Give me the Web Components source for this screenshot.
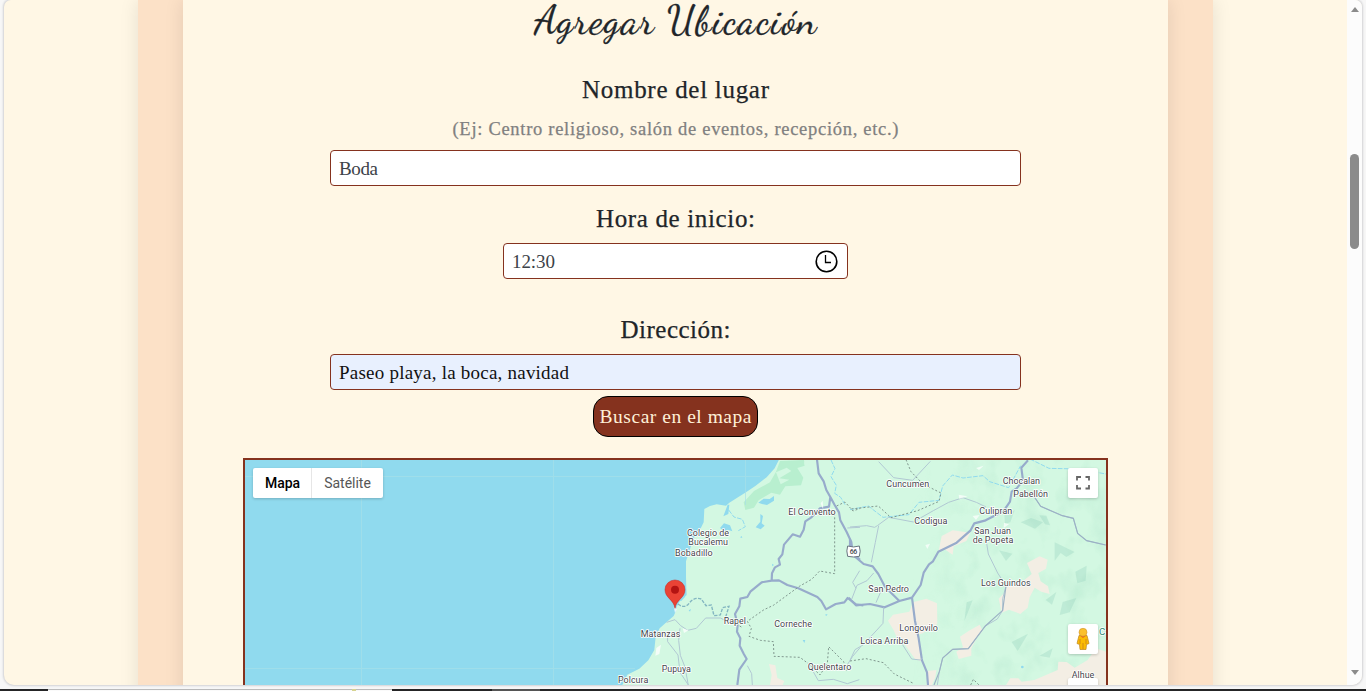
<!DOCTYPE html>
<html lang="es"><head><meta charset="utf-8"><title>Agregar Ubicación</title>
<style>
html,body{margin:0;height:100%;overflow:hidden;background:#f7f7f7}
body{font-family:"Liberation Serif",serif;color:#212529}
</style></head><body>
<app-window>
  <location-card>
    <fit-text class="title" width="282">Agregar Ubicación</fit-text>
    <fit-text class="label first" width="187">Nombre del lugar</fit-text>
    <fit-text class="hint" width="446">(Ej: Centro religioso, salón de eventos, recepción, etc.)</fit-text>
    <form-field style="--w:691px"><fit-text width="39">Boda</fit-text></form-field>
    <fit-text class="label second" width="159">Hora de inicio:</fit-text>
    <form-field style="--w:345px"><fit-text width="43">12:30</fit-text><clock-icon slot="end"></clock-icon></form-field>
    <fit-text class="label third" width="110">Dirección:</fit-text>
    <form-field style="--w:691px;--bg:#e8f0fe;--ink:#111"><fit-text width="230">Paseo playa, la boca, navidad</fit-text></form-field>
    <search-button><fit-text width="152">Buscar en el mapa</fit-text></search-button>
    <map-view></map-view>
  </location-card>
</app-window>
<script>
const define=(name,html,init)=>customElements.define(name,class extends HTMLElement{
  constructor(){super();const t=document.createElement('template');t.innerHTML=html;
    this.attachShadow({mode:'open'}).append(t.content.cloneNode(true));}
  connectedCallback(){if(init)init(this);}
});

define('app-window',`<style>
:host{display:flex;flex-direction:column;height:691px;width:1366px;overflow:hidden}
.frame{margin:0 4px;height:685px;flex:none;display:flex;background:#fff7e5;border-radius:7px 7px 10px 10px;overflow:hidden}
.shell{flex:none;height:689px;overflow:hidden;background:#f7f7f7}
.frame{box-shadow:0 0 2px 1px #d2d2d5}
.page{flex:1;display:flex;justify-content:center;min-width:0;overflow:hidden}
.bar{width:15px;background:#fcfcfc;display:flex;flex-direction:column;align-items:center}
.up,.down{width:0;height:0;border:4.5px solid transparent}
.up{border-top:0;border-bottom:5px solid #8b8b8b;margin-top:7px}
.thumb{width:9px;height:95px;border-radius:5px;background:#8b8b8b;margin-top:142px}
.down{border-bottom:0;border-top:5px solid #8b8b8b;margin-top:421px}
.task{height:2px;display:flex;background:#252526}
.task i{display:block}
</style>
<div class="shell"><div class="frame"><div class="page"><slot></slot></div>
<div class="bar"><div class="up"></div><div class="thumb"></div><div class="down"></div></div></div></div>
<div class="task"><i style="width:48px"></i><i style="width:304px;background:linear-gradient(#bbb 1px,#fafafa 1px)"></i><i style="width:4px;background:#d6d391"></i><i style="width:36px;background:linear-gradient(#bbb 1px,#fafafa 1px)"></i><i style="width:100px"></i><i style="width:48px;background:#555"></i></div>`);

define('location-card',`<style>
:host{display:block;box-sizing:border-box;width:1075px;height:720px;padding:0 45px;background:#fce1c7;box-shadow:0 0 18px rgba(0,0,0,.1)}
.inner{height:100%;background:#fff7e5;box-shadow:0 0 18px rgba(0,0,0,.1);display:flex;flex-direction:column;align-items:center}
::slotted(.title){font:40px/40px "Dancing Script","Liberation Serif",cursive;-webkit-text-stroke:.3px}
::slotted(.label){font-size:25px;line-height:30px;-webkit-text-stroke:.25px}
::slotted(.first){margin-top:35px}
::slotted(.hint){font-size:18.500px;line-height:24px;color:#808080;margin:12px 0 9px;-webkit-text-stroke:.25px}
::slotted(.second){margin:18px 0 9px}
::slotted(.third){margin:36px 0 9px}
</style><div class="inner"><slot></slot></div>`);

/* Spreads its letters so that the line takes the given width. */
define('fit-text',`<style>:host{display:block;flex:none;white-space:pre}span{display:inline-block}</style><span><slot></slot></span>`,el=>{
  const s=el.shadowRoot.querySelector('span');
  const fit=()=>{const n=el.textContent.length,w=s.getBoundingClientRect().width,d=(el.getAttribute('width')-w)/(n-1);
    s.style.letterSpacing=d+'px';s.style.marginRight=-d+'px';};
  document.addEventListener('DOMContentLoaded',fit);
});

define('form-field',`<style>
:host{display:flex;flex:none;box-sizing:border-box;width:var(--w);height:36px;border:1px solid #85321e;border-radius:4px;background:var(--bg,#fff);color:var(--ink,#3c4248);align-items:center;justify-content:space-between;padding:1px 9px 0 8px;font-size:19px;line-height:24px}
</style><slot></slot><slot name="end"></slot>`);

define('clock-icon',`<style>:host{display:block;width:23px;height:23px;margin-top:-1px}svg{display:block}</style>
<svg width="23" height="23" fill="none" stroke="#000"><circle cx="11.5" cy="11.5" r="10.3" stroke-width="1.6"/><path d="M10.5 5v7.500H16" stroke-width="1.300"/></svg>`);

define('search-button',`<style>:host{display:flex;flex:none;box-sizing:border-box;width:165px;height:41px;margin-top:6px;border:1px solid #000;border-radius:15px;background:#85321e;color:#fff0d8;align-items:center;justify-content:center;font-size:19.500px;line-height:24px}</style><slot></slot>`);

define('map-view',`<style>
:host{display:block;flex:none;box-sizing:border-box;position:relative;width:865px;height:300px;margin-top:21px;border:2px solid #85321e;font-family:Roboto,sans-serif;overflow:hidden}
svg{display:block}
.types{position:absolute;left:8px;top:8px;display:flex;height:30px;background:#fff;border-radius:2px;box-shadow:0 1px 3px rgba(0,0,0,.2);font-size:14px;line-height:30px;color:#565656}
.types b{width:58px;padding-left:1px;box-sizing:border-box;width:59px;text-align:center;font-weight:500;color:#000;border-right:1px solid #e6e6e6}
.types span{width:71px;text-align:center}
.ctl{position:absolute;right:8px;width:30px;height:30px;background:#fff;border-radius:2px;box-shadow:0 1px 3px rgba(0,0,0,.2)}
text{font-size:27px;fill:#45464c;stroke:#fff;stroke-width:5px;stroke-linejoin:round;paint-order:stroke}
.w{fill:#90daee}.t{fill:none;stroke:#90daee;stroke-width:4;stroke-dasharray:14 4}
.r{fill:none;stroke:#97abcb;stroke-width:6.500;stroke-linejoin:round}
.s{fill:none;stroke:#b1c8d3;stroke-width:3;stroke-linejoin:round}
.d{fill:none;stroke:#80978e;stroke-width:3;stroke-dasharray:6 6}
.u{fill:#f3eee4}
</style>
<svg width="861" height="225" viewBox="245 460 861 225">
<defs><filter id="relief" x="0" y="0" width="1" height="1" color-interpolation-filters="sRGB"><feTurbulence type="fractalNoise" baseFrequency=".045 .035" numOctaves="3" seed="8"/><feColorMatrix values="0 0 0 0 .47 0 0 0 0 .78 0 0 0 0 .66 1.8 0 0 0 -.84"/></filter>
<linearGradient id="fade"><stop offset="0" stop-color="#000"/><stop offset=".35" stop-color="#fff"/></linearGradient><mask id="m"><rect x="910" y="460" width="200" height="230" fill="url(#fade)"/></mask></defs>
<rect x="245" y="460" width="861" height="225" fill="#d3f8e2"/>
<g mask="url(#m)"><rect x="910" y="460" width="200" height="230" filter="url(#relief)" opacity=".2"/></g>
<g transform="translate(600 455) scale(.33333)">
<path class="w" d="M-1070 10H539L524 40 500 67 467 92 438 112 414 127 388 143 378 152 350 148 330 153 313 162 311 202 300 224 282 248 268 287 258 319 258 365 259 400 260 420 240 438 230 455 228 467 221 483 201 500 179 520 167 545 163 585 145 616 118 641 82 659 67 690H-1070Z"/>
<path d="M540 18 528 50 510 82 462 108 431 142 436 165 462 158 476 136 514 113 540 119 556 94 603 91 610 68 592 39 614 32 612 15Z" fill="#b8efcf"/>
<path d="M528 52l32-14 14 10-36 22 30 4-26 14M612 22l24 8-20 6Z" fill="#d3f8e2"/>
<path class="w" d="M475 143 491 131 509 132 522 123 522 137 501 150 486 147ZM481 177l8 6-4 22 9 7-12 11-15-6 14-17ZM360 219l12-14 18 6 7 18-14-5-7 8ZM383 149h5l-3 28-15 7ZM238 435l10-21 10-3-3 15-12 13ZM420 247l5-4 2 6ZM608 555h8l-3 9ZM266 466l7-4-3 8ZM676 478l7 0-5 6ZM516 326l6 4-5 4Z"/>
<path class="t" style="stroke-width:3" d="M386 165l16 21 25 7 9 22-21 12M693 15l12 26-12 24 16 26-5 24 18 12 13 22"/>
<path d="M234 447q20 16 34-3t36-12l14 20 16-2 8 32 19-2 7-22 19-4-10 32" fill="none" stroke="#83b6c1" stroke-width="4" stroke-dasharray="10 4"/>
<path class="r" d="M651 14 656 55 671 79 679 105 691 126 704 150 717 172 721 196 740 231 754 261 758 293 780 314M691 126 687 155 660 160 633 188 616 199 611 224 600 245 578 238 552 269 547 298 536 312 540 329 525 337 516 355 515 377 485 382 451 410 442 426 421 431 418 454 405 477 413 510 411 530 421 550 419 572 431 596 440 612 418 644 412 690M515 377 537 376 562 390 595 400 652 426 664 438 678 463 707 447 733 442 743 429 768 448 790 451"/>
<path class="s" d="M200 502l25-8 17 18 21 14 26-6 28-31 44 0 29 15M202 530l1 30 31 40 6 52 25 38M240 520l-4 36 5 45 14 35 10 55M442 632l13 24 2 34M768 400l-10-18 21-35M634 640l21 37 45-4 42 13 36-12M735 640l23-36 23-27M742 219l38-2"/>
<path class="d" d="M704 175V356L659 348 635 373 598 394 520 451 492 464 442 499 454 520 447 544 481 556 520 560 522 604 600 607 625 626 660 660 682 626 686 575 731 620 740 650M710 153l25-12 24 27 22-8M424 516l-48-28"/>
<path class="u" d="M507 627l19 4 6 38 21 9-5 12H510l5-30Z"/>
<path fill="#fff" opacity=".75" d="M221 455l10 7-6 12ZM169 579l14-10-5 28-12 5ZM248 520l18 6-14 8ZM662 145l6-8 2 28Z"/>
</g>
<g transform="translate(850 455) scale(.33333)">
<path class="u" d="M275 243l33-17 53 7-12 25-38 16-3 25-22-15-20 3ZM531 324l38-20 24 10-5 27-23 13 7 25 22 15 5 23-25-7-20-12-15 29-6 31-22 19-34-13-22 9-9-42 17-18 10-25 39-4 33-27ZM189 442l40-11 32 14 1 62-44 28-14 4 8 55 1 25-18-7-38-54-17-12-9-20-17-29 15-18 49-9ZM330 545l27-18 32-18 9 19-16 18-18 34 0 22-38 10-7-22 20-13ZM233 648l26-3-3 22-10 23H230ZM468 690l13-20 24 0 10 10 38-5 70-30 2-25 25 1 24 17 39-23 25-35 30 10v100Z"/>
<g fill="#90cdb9" opacity=".3"><path d="M463 180l31-14-13 36-16 4ZM512 202l31-13 36 13-24 19ZM447 286l40 10-19 22ZM568 181l21 1 11 29-15-3ZM614 262l60 29-25 15-17-12-18 23ZM587 435l32-24-13 38ZM638 441l41-12-20 43-30 8ZM676 350l34-18-3 45-25 8ZM485 561l49-25-31 52ZM350 442l18-6-25 63ZM569 602l39-22-9 28Z"/></g>
<path class="t" style="stroke-width:3" d="M0 164l55-11 44 34 78-8 30-37 60-6 11-43 29-33 32 9 60-7 20 18 57 18 36-66M540 12l57 28 88 2 83 15"/>
<path class="r" d="M534 16 514 38 519 77 500 100 485 110 480 140 460 169 407 196 373 205 361 227 320 263 265 290 249 319 237 328 221 353 212 390 186 428 148 438 104 457 60 447 18 451-4 428M0 251 0 292 41 327 68 334 85 357 105 395 148 438M186 428 195 498 206 550 216 616 231 652 234 690"/>
<path class="s" d="M552 124l20 30 65 28 33 8 13 45 27 22 57 13M405 232l10 65 28 57 25 39-10 38 0 35-16 26-36 21-25 33-26 35-47 2-30 26-10 41-6 40-8 20M0 216l50-4 24 5 8-5 34-25 74 14 60-34 46-25 43-14 40 14 29 14M101 457l-2 48-21 23-39 42-24 14-15 32M150 557l35 55 26 3 8-6M86 20l45 48 57 8 53-57M86 212l-10 50-12 60M71 354l-20 23-30 14-16 42M97 399l-19 44"/>
<path d="M552 124l20 30 65 28 33 8 13 45 27 22 57 13M468 393l-10 73-52 47-51 68-47 2-30 26-10 41-16 40" fill="none" stroke="#9bb1c4" stroke-width="3.500"/>
<path class="d" d="M168 14l15 36 36 37 54 27-6 25-64 28-80 21-38-35-82 9M0 618l48-7 52 12 33 34 55 27M362 690l8-17 17 17"/>
<path fill="#fff" opacity=".7" d="M378 39l23-7-14 13ZM326 119l27 5-25 8ZM226 270l14-4-8 16ZM368 183l21-3-11 15ZM462 203l15 5-16 11Z"/>
<circle cx="517" cy="636" r="4" class="w"/>
</g>
<path d="M361.500 460V685M553.500 460V685M745.500 460V505M245 476.500H760M245 668.500H635" stroke="#a8e1e8" opacity=".65"/>
<g transform="translate(600 455) scale(.33333)">
<text x="565" y="179" textLength="142">El Convento</text><text x="261" y="243" textLength="126">Colegio de</text><text x="265" y="270" textLength="119">Bucalemu</text><text x="225" y="304" textLength="113">Bobadillo</text><text x="371" y="508" textLength="67">Rapel</text><text x="523" y="515" textLength="113">Corneche</text><text x="122" y="545" textLength="119">Matanzas</text><text x="185" y="651" textLength="88">Pupuya</text><text x="54" y="684" textLength="91">Polcura</text><text x="623" y="644" textLength="131">Quelentaro</text>
<path d="M743 273q18 6 35 0 5 16 0 31-17 4-35 0-5-17 0-31Z" fill="#fff" stroke="#68737e" stroke-width="3"/><text x="749" y="298" textLength="23" style="font-size:21px;font-weight:500;stroke:none">66</text>
<path d="M225 460C222 434 195 429 195 404A30 29 0 1 1 255 404C255 429 228 434 225 460Z" fill="#ea4335" stroke="#c5221f" stroke-width="1.500"/><circle cx="225" cy="404" r="12" fill="#b31412"/>
</g>
<g transform="translate(850 455) scale(.33333)">
<text x="109" y="97" textLength="129">Cuncumen</text><text x="458" y="86" textLength="112">Chocalan</text><text x="490" y="126" textLength="104">Pabellón</text><text x="388" y="176" textLength="99">Culipran</text><text x="193" y="207" textLength="99">Codigua</text><text x="373" y="237" textLength="110">San Juan</text><text x="368" y="264" textLength="122">de Popeta</text><text x="393" y="392" textLength="149">Los Guindos</text><text x="55" y="410" textLength="122">San Pedro</text><text x="148" y="527" textLength="116">Longovilo</text><text x="31" y="567" textLength="144">Loica Arriba</text><text x="665" y="670" textLength="68">Alhue</text><text x="747" y="540" style="fill:#2d8a73;font-size:29px">C</text>
</g></svg>
<div class="types"><b>Mapa</b><span>Satélite</span></div>
<div class="ctl" style="top:8px"><svg width="30" height="30" fill="none" stroke="#666" stroke-width="1.800"><path d="M9 12.500V9H13M17.500 9H21V12.500M21 17V20.500H17.500M13 20.500H9V17"/></svg></div>
<div class="ctl" style="top:164px"><svg width="30" height="30"><path d="M11 11.500H19L21 19.500 18.500 20.500 18 25.500H12L11.500 20.500 9 19.500Z" fill="#fbbc04" stroke="#bd8420" stroke-width=".7"/><path d="M11.500 11.500 15 14 18.500 11.500Z" fill="#e66a20"/><path d="M15 19V25M12 15V20M18 15V20" stroke="#d28b16"/><circle cx="15" cy="8.300" r="4" fill="#fbc02d" stroke="#ce9430" stroke-width=".6"/></svg></div>
<div class="ctl" style="top:218px"></div>`);
</script>
</body></html>
